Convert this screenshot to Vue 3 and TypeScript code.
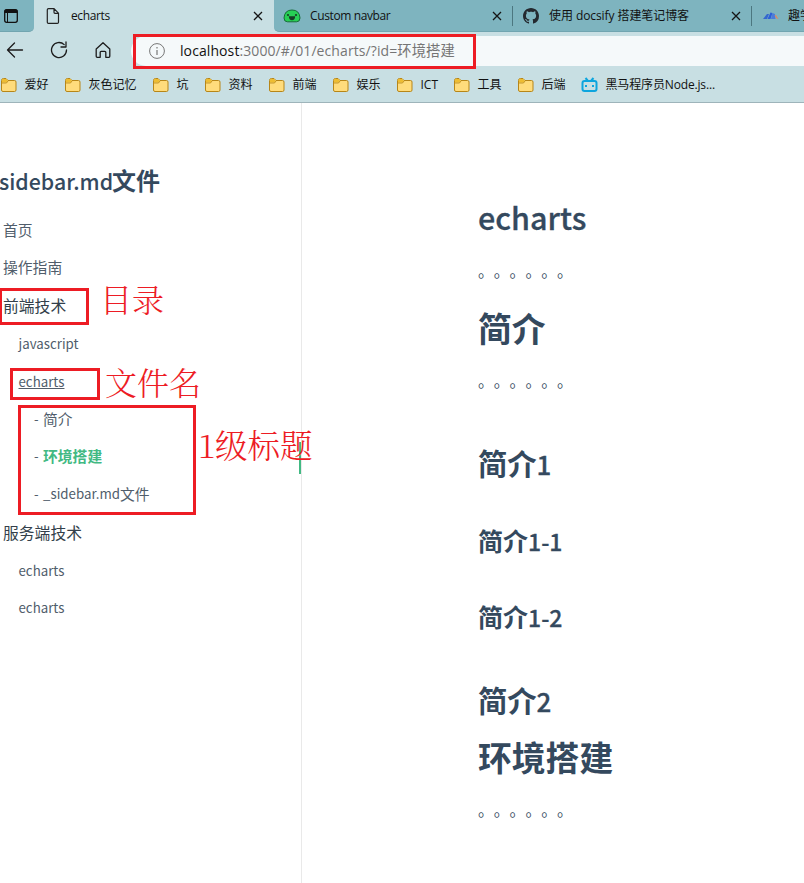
<script setup lang="ts">
interface Bookmark { label: string; width: number; video?: boolean }
interface NavRow { label: string; level: number; height: number; state?: string }
interface Block { kind: string; text: string; latin?: string; height: number }

const bookmarks: Bookmark[] = [
  { label: '爱好', width: 64 },
  { label: '灰色记忆', width: 88 },
  { label: '坑', width: 52 },
  { label: '资料', width: 64 },
  { label: '前端', width: 64 },
  { label: '娱乐', width: 64 },
  { label: 'ICT', width: 57 },
  { label: '工具', width: 64 },
  { label: '后端', width: 64 },
  { label: '黑马程序员Node.js...', width: 160, video: true },
]

const nav: NavRow[] = [
  { label: '首页', level: 0, height: 37 },
  { label: '操作指南', level: 0, height: 37 },
  { label: '前端技术', level: 1, height: 40 },
  { label: 'javascript', level: 2, height: 37 },
  { label: 'echarts', level: 2, height: 38, state: 'current' },
  { label: '简介', level: 3, height: 37 },
  { label: '环境搭建', level: 3, height: 37, state: 'active' },
  { label: '_sidebar.md文件', level: 3, height: 38 },
  { label: '服务端技术', level: 1, height: 40 },
  { label: 'echarts', level: 2, height: 37 },
  { label: 'echarts', level: 2, height: 37 },
]

const dots = '。。。。。。'
const blocks: Block[] = [
  { kind: 'h1', text: '', latin: 'echarts', height: 60 },
  { kind: 'p', text: dots, height: 51 },
  { kind: 'h1', text: '简介', height: 59 },
  { kind: 'p', text: dots, height: 75 },
  { kind: 'h2', text: '简介', latin: '1', height: 85 },
  { kind: 'h3', text: '简介', latin: '1-1', height: 76 },
  { kind: 'h3', text: '简介', latin: '1-2', height: 76 },
  { kind: 'h2', text: '简介', latin: '2', height: 58 },
  { kind: 'h1', text: '环境搭建', height: 59 },
  { kind: 'p', text: dots, height: 60 },
]
</script>

<template>
  <div class="window">
    <header class="chrome">
      <div class="tabs">
        <div class="tab-menu">
          <svg width="16" height="16" viewBox="0 0 16 16"><rect x="1.700" y="1.700" width="12.600" height="12.600" rx="2" fill="none" stroke="#111" stroke-width="1.300"/><path d="M1.500 4V3q0-1.500 1.500-1.500h10q1.500 0 1.500 1.500v2h-13z" fill="#111"/><path d="M4.500 5v9" stroke="#111" stroke-width="1"/></svg>
        </div>
        <div class="tab selected">
          <svg class="page-icon" width="14" height="18" viewBox="0 0 14 18"><path d="M2.500 1.600h5.500l4.500 4.600v9q0 1.200-1.200 1.200H2.500q-1.200 0-1.200-1.200V2.800q0-1.200 1.200-1.200zM8 1.700v3.600q0 1 1 1h3.500" fill="none" stroke="#222" stroke-width="1.200"/></svg>
          <span class="title">echarts</span>
          <svg class="close" width="10" height="10" viewBox="0 0 10 10"><path d="M1 1l8 8M9 1L1 9"/></svg>
        </div>
        <div class="tab second">
          <svg width="18" height="16" viewBox="0 0 18 16"><path d="M1 10Q1.500 2 9 2t8 8q0 3.800-3.500 3.800h-9Q1 13.800 1 10z" fill="#27cf55" stroke="#176b38"/><path d="M5.800 8.200h6.400Q12 12.200 9 12.200T5.800 8.200z" fill="#173d27"/><circle cx="5" cy="7" r="1.100" fill="#173d27"/><circle cx="13" cy="7" r="1.100" fill="#173d27"/></svg>
          <span class="title">Custom navbar</span>
          <svg class="close" width="10" height="10" viewBox="0 0 10 10"><path d="M1 1l8 8M9 1L1 9"/></svg>
        </div>
        <div class="tab third">
          <svg width="16" height="16" viewBox="0 0 16 16"><path fill="#24292f" d="M8 0C3.580 0 0 3.580 0 8c0 3.540 2.290 6.530 5.470 7.590.4.070.55-.17.55-.38 0-.19-.01-.82-.01-1.490-2.010.37-2.530-.49-2.690-.94-.09-.23-.48-.94-.82-1.130-.28-.15-.68-.52-.01-.53.63-.01 1.080.58 1.230.82.720 1.210 1.870.87 2.330.66.070-.52.280-.87.510-1.070-1.780-.2-3.640-.89-3.640-3.950 0-.87.310-1.590.82-2.150-.08-.2-.36-1.020.08-2.120 0 0 .67-.21 2.200.82.640-.18 1.320-.27 2-.27s1.360.09 2 .27c1.530-1.040 2.200-.82 2.200-.82.440 1.100.160 1.920.080 2.120.510.560.820 1.270.820 2.150 0 3.070-1.870 3.750-3.650 3.950.290.250.540.730.540 1.480 0 1.070-.01 1.930-.01 2.200 0 .21.150.46.550.38A8.010 8.010 0 0016 8c0-4.420-3.580-8-8-8z"/></svg>
          <span class="title">使用 docsify 搭建笔记博客</span>
          <svg class="close" width="10" height="10" viewBox="0 0 10 10"><path d="M1 1l8 8M9 1L1 9"/></svg>
        </div>
        <div class="tab fourth">
          <svg width="18" height="10" viewBox="0 0 18 10"><path d="M1 8l4-5 2 0-2 5z" fill="#3568cf"/><path d="M5.500 8l3-6.500 2 .5-2 6z" fill="#2c5fd8"/><path d="M9 8l1.500-6 2.500 1 .5 5z" fill="#4b7cda"/><path d="M12.500 4.500l1.500-.5 2.500 4-2-.5z" fill="#da8b67"/></svg>
          <span class="title">趣学</span>
        </div>
      </div>
      <div class="toolbar">
        <svg class="tool" width="18" height="18" viewBox="0 0 18 18"><path d="M16.500 9H1.500M8.500 2L1.500 9l7 7"/></svg>
        <svg class="tool" width="18" height="18" viewBox="0 0 18 18"><path d="M16.500 9A7.500 7.500 0 1 1 14.200 3.600M16 1v5h-5"/></svg>
        <svg class="tool" width="18" height="18" viewBox="0 0 18 18"><path d="M2.200 8L9 1.800 15.800 8v7.300q0 1-1 1h-3v-5q0-1-1-1H7.200q-1 0-1 1v5h-3q-1 0-1-1z"/></svg>
        <div class="address">
          <svg width="16" height="16" viewBox="0 0 16 16"><circle cx="8" cy="8" r="7.400" fill="none" stroke="#777"/><path d="M8 7v5M8 4v1.500" stroke="#777" stroke-width="1.200"/></svg>
          <span class="url"><b>localhost</b>:3000/#/01/echarts/?id=<i>环境搭建</i></span>
        </div>
      </div>
      <div class="bookmarks">
        <div v-for="mark in bookmarks" :key="mark.label" class="bookmark" :style="{ width: mark.width + 'px' }">
          <svg v-if="mark.video" width="17" height="16" viewBox="0 0 17 16"><path d="M4.500 1l2.200 2.500M12.500 1l-2.200 2.500" stroke="#0da5de" stroke-width="2"/><rect x="1.500" y="4" width="14" height="10" rx="2" fill="none" stroke="#0da5de" stroke-width="2"/><path d="M5 8v2M12 8v2" stroke="#0da5de" stroke-width="2"/></svg>
          <svg v-else width="17" height="16" viewBox="0 0 17 16"><path d="M1.500 3.500q0-2 2-2H6l2 2h6.500q1.500 0 1.500 1.500v8q0 1.500-1.500 1.500H3q-1.500 0-1.500-1.500z" fill="#ffdc7c" stroke="#b78618"/><path d="M2 3q0-1 1-1h3l2 2-1.500 1.500H2z" fill="#eebd32"/><path d="M2 6h4.500L8 4" fill="none" stroke="#b78618" stroke-width=".8"/></svg>
          <span :class="{ long: mark.video }">{{ mark.label }}</span>
        </div>
      </div>
    </header>

    <div class="page">
      <aside class="sidebar">
        <h1 class="site-name"><span>sidebar.md</span>文件</h1>
        <nav>
          <div v-for="(row, i) in nav" :key="i" class="row" :class="['level-' + row.level, row.state]" :style="{ height: row.height + 'px' }">
            <span v-if="row.level === 3" class="dash">-</span>
            <template v-if="row.label.startsWith('_')"><span class="latin">_sidebar.md</span><span>文件</span></template>
            <span v-else>{{ row.label }}</span>
          </div>
        </nav>
      </aside>
      <main class="content">
        <div v-for="(block, i) in blocks" :key="i" :class="['block', block.kind]" :style="{ height: block.height + 'px' }">
          <span>{{ block.text }}</span><span v-if="block.latin" class="latin">{{ block.latin }}</span>
        </div>
      </main>
    </div>

    <div class="marker"></div>
    <div class="box box-url"></div>
    <div class="box box-folder"></div>
    <div class="box box-file"></div>
    <div class="box box-headings"></div>
    <div class="note note-folder">目录</div>
    <div class="note note-file">文件名</div>
    <div class="note note-headings"><span>1</span>级标题</div>
  </div>
</template>

<style>
body { background: #fff; overflow: hidden; }
</style>

<style scoped>
* { box-sizing: border-box; }
.window { position: relative; width: 804px; height: 883px; overflow: hidden; background: #fff; color: #34495e; font-family: "Noto Sans CJK SC", sans-serif; white-space: nowrap; }
svg { flex: none; display: block; }
.chrome { height: 103px; background: #c8dfe3; border-bottom: 1px solid #9eb4ba; color: #111; font: 12px/18px "Open Sans", "Noto Sans CJK SC", sans-serif; }
.tabs { display: flex; height: 32px; background: #c8dfe3; }
.tab-menu { width: 34px; padding: 8px 0 0 3px; background: #7eb4bf; border-bottom: 1px solid #71a5b0; border-radius: 0 0 5px 0; }
.tab { display: flex; align-items: center; height: 32px; background: #7eb4bf; border-bottom: 1px solid #71a5b0; }
.selected { width: 240px; padding: 0 11px 0 12px; background: #c8dfe3; border: 0; }
.selected .title { margin-left: 11px; }
.title { letter-spacing: -.38px; }
.close { margin-left: auto; stroke: #151515; stroke-width: 1.300; }
.second { width: 238px; padding: 0 10px 0 9px; border-bottom-left-radius: 5px; }
.second .title { margin-left: 9px; }
.third { position: relative; width: 239px; padding: 0 10px 0 11px; }
.third .title { margin-left: 10px; letter-spacing: -.08px; }
.fourth { position: relative; width: 53px; padding-left: 11px; overflow: hidden; }
.fourth .title { margin-left: 8px; letter-spacing: 0; }
.third::before, .fourth::before { content: ""; position: absolute; left: 0; top: 6px; width: 1px; height: 20px; background: #4c7780; }
.toolbar { display: flex; align-items: center; height: 35px; gap: 26px; padding: 1px 0 0 6px; }
.tool { fill: none; stroke: #1c1c1c; stroke-width: 1.300; stroke-linecap: round; stroke-linejoin: round; }
.address { display: flex; flex: 1; align-items: center; height: 30px; margin-left: -7px; margin-top: 2px; padding-left: 18px; background: #f5f9fa; border-radius: 15px 0 0 15px; color: #757575; }
.url { margin-left: 15px; font-size: 14px; letter-spacing: .09px; }
.url b { color: #111; font-weight: 400; }
.url i { font-style: normal; font-size: 14.300px; }
.bookmarks { display: flex; height: 35px; align-items: center; }
.bookmark { display: flex; align-items: center; gap: 7.500px; flex: none; }
.long { letter-spacing: -.15px; }
.page { display: flex; height: 780px; }
.sidebar { width: 302px; border-right: 1px solid #e9e9e9; padding-top: 59px; }
.site-name { margin: 0; height: 49px; line-height: 36px; font-size: 24px; }
.site-name span { display: inline-block; width: 112px; margin-left: -1px; margin-right: 1px; font-size: 21.300px; font-weight: 500; }
.row { display: flex; align-items: center; padding-left: 3px; font-size: 14.800px; color: #505d6b; }
.level-1 { font-size: 15.800px; color: #333f4b; }
.level-2 { padding-left: 18.500px; font-size: 13.300px; }
.level-3 { padding-left: 34px; }
.dash { width: 9px; font-size: 13.300px; }
.row .latin { font-size: 13.300px; }
.current { text-decoration: underline; }
.active span:last-child { color: #42b983; font-weight: 700; }
.content { padding: 84px 0 0 176px; }
.block { display: flex; align-items: baseline; font-weight: 700; }
.h1 { font-size: 33.800px; line-height: 60px; }
.h1 .latin { font-size: 30.500px; font-weight: 500; -webkit-text-stroke: .3px; }
.h2 { font-size: 29.300px; line-height: 60px; }
.h2 .latin { font-size: 26px; font-weight: 500; -webkit-text-stroke: .3px; }
.h3 { font-size: 25px; line-height: 46px; }
.h3 .latin { font-size: 23px; font-weight: 500; -webkit-text-stroke: .3px; }
.p { font-size: 15.800px; line-height: 48px; font-weight: 400; text-spacing-trim: space-all; font-feature-settings: "chws" 0, "halt" 0; }
.marker { position: absolute; left: 299px; top: 442px; width: 2px; height: 32px; background: #42b983; }
.box { position: absolute; border: 3px solid #ed1c24; }
.box-url { left: 133px; top: 34px; width: 343px; height: 35px; }
.box-folder { left: -1px; top: 288px; width: 90px; height: 37px; }
.box-file { left: 10px; top: 368px; width: 90px; height: 32px; }
.box-headings { left: 18px; top: 405px; width: 178px; height: 110px; }
.note { position: absolute; color: #ed1c24; font: 300 32px/40px "Noto Serif CJK SC", "Noto Serif SC", "SimSun", "Noto Sans CJK SC", serif; }
.note-folder { left: 100px; top: 278px; }
.note-file { left: 105px; top: 361px; }
.note-headings { display: flex; left: 198px; top: 424px; font-size: 32.500px; }
.note-headings span { width: 17px; }
</style>
